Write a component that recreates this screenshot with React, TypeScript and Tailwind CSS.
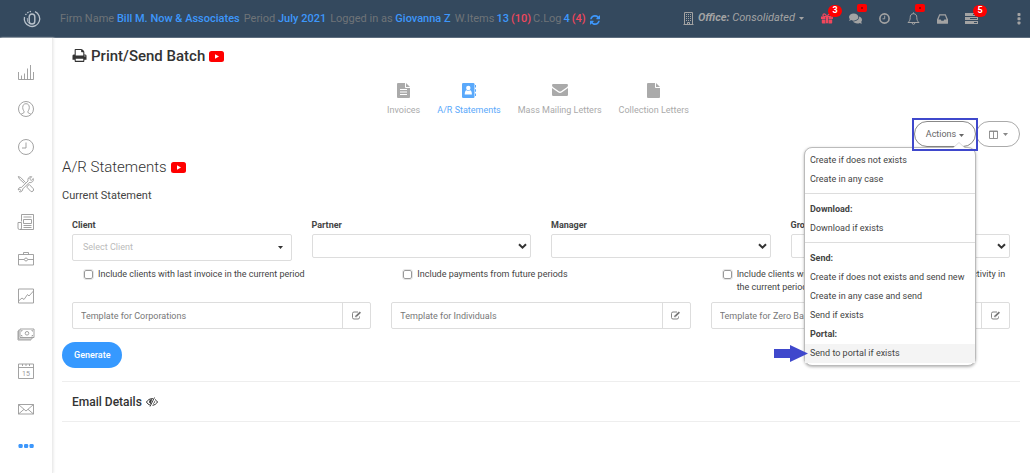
import type { ReactNode } from "react";
import { FaComments } from "react-icons/fa";

const App = () => {
  return (
    <div className="flex min-h-screen flex-col bg-white font-['Roboto',sans-serif] text-[9px] text-[#444]">
      <TopBar />
      <div className="flex flex-1">
        <Sidebar />
        <main className="min-w-0 flex-1 pt-2 pr-[10px] pl-[9px]">
          <h1 className="flex h-5 items-center gap-1 pl-[10px] text-[15px] font-medium text-[#333]">
            <PrintIcon />
            Print/Send Batch
            <VideoIcon />
          </h1>
          <Tabs />
          <Toolbar />
          <StatementForm />
        </main>
      </div>
    </div>
  );
};

const TopBar = () => (
  <header className="flex h-[38px] items-center border-b border-[#5d6d7e] bg-[#34495e] pr-[6px] text-[11px] whitespace-nowrap text-[#6f7478]">
    <div className="flex w-[60px] shrink-0 justify-center pl-1">
      <Logo />
    </div>
    <div className="flex items-center gap-1 pt-[2px]">
      <span>
        Firm Name <b className="font-medium text-[#3d97fb]">Bill M. Now &amp; Associates</b>
      </span>
      <span>
        Period <b className="font-medium text-[#3d97fb]">July 2021</b>
      </span>
      <span>
        Logged in as <b className="font-medium text-[#3d97fb]">Giovanna Z</b>
      </span>
      <span className="flex items-center gap-[2px]">
        W.Items <b className="font-medium text-[#3d97fb]">13</b>
        <b className="font-medium text-[#f0475c]">(10)</b>
        C.Log <b className="font-medium text-[#3d97fb]">4</b>
        <b className="font-medium text-[#f0475c]">(4)</b>
        <button aria-label="Refresh" className="pl-[2px] text-[#3d97fb]">
          <RefreshIcon />
        </button>
      </span>
    </div>
    <div className="ml-auto flex items-center text-[#a3a3a3]">
      <button className="mr-[8px] flex items-center gap-1 italic">
        <BuildingIcon />
        <span>
          <b>Office:</b> Consolidated
        </span>
        <Caret />
      </button>
      {notifications.map((item) => (
        <button
          key={item.label}
          aria-label={item.label}
          className="relative flex h-6 w-[29px] items-center justify-center"
        >
          {item.icon}
          {item.count && (
            <span className="absolute -top-[2px] left-4 flex h-[12px] w-[14px] items-center justify-center rounded-full bg-[#f00] text-[9px] font-bold text-white">
              {item.count}
            </span>
          )}
          {item.dot && (
            <span className="absolute -top-[3px] left-4 flex h-2 w-[10px] items-center justify-center rounded-xs bg-[#f00]">
              <span className="size-[2px] bg-[#a00]" />
            </span>
          )}
        </button>
      ))}
      <button aria-label="More" className="ml-[28px] px-[3px]">
        <svg width="4" height="12" viewBox="0 0 4 12" fill="currentColor">
          <rect x=".5" y="0" width="3" height="3" rx=".8" />
          <rect x=".5" y="4.200" width="3" height="3" rx=".8" />
          <rect x=".5" y="8.400" width="3" height="3" rx=".8" />
        </svg>
      </button>
    </div>
  </header>
);

const Sidebar = () => (
  <nav className="flex w-[53px] shrink-0 flex-col border-r border-[#ececec] pt-[15px] pb-2 shadow-[1px_0_2px_#eee]">
    {sideLinks.map((link) => (
      <a
        key={link.label}
        href="#"
        aria-label={link.label}
        className="flex flex-1 items-center justify-center text-[#999]"
      >
        <svg
          width="18"
          height="18"
          viewBox="0 0 18 18"
          fill="none"
          stroke="currentColor"
          strokeWidth="0.9"
        >
          {link.drawing}
        </svg>
      </a>
    ))}
  </nav>
);

const Tabs = () => (
  <nav className="mt-[14px] flex justify-center gap-[17px] pr-[6px]">
    {tabs.map((tab) => (
      <a
        key={tab.label}
        href="#"
        className={
          tab.active
            ? "flex flex-col items-center text-[#5aa9fb]"
            : "flex flex-col items-center text-[#aaa]"
        }
      >
        <span className="flex h-5 items-center">{tab.icon}</span>
        <span className="h-4 pt-[2px] leading-4">{tab.label}</span>
      </a>
    ))}
  </nav>
);

const Toolbar = () => (
  <div className="mt-[5px] flex justify-end">
    <div className="relative z-10">
      <button className="flex h-[26px] w-[62px] items-center justify-center gap-[3px] rounded-full border border-[#888] pt-[2px] text-[#666]">
        Actions <Caret />
      </button>
      <ActionsMenu />
      {/* highlight frame around the button */}
      <div className="pointer-events-none absolute -inset-x-[2px] -top-[3px] h-[33px] border-2 border-[#3f48cc]" />
    </div>
    <button
      aria-label="Columns"
      className="flex h-[26px] w-[44px] items-center justify-center gap-[5px] rounded-full border border-[#aaa] text-[#888]"
    >
      <svg width="9" height="9" viewBox="0 0 9 9" fill="none" stroke="currentColor">
        <path d="M.5 1h8v7.500h-8zM.5 1.500h8M4.500 1v7.500" strokeWidth="0.9" />
      </svg>
      <Caret />
    </button>
  </div>
);

const ActionsMenu = () => (
  <div className="absolute top-[26px] right-0 w-[172px] rounded-lg border border-[#bbb] bg-white pt-[3px] pb-[2px] shadow-[0_1px_3px_rgba(0,0,0,0.3)]">
    <svg
      className="absolute -top-[6px] right-[10px]"
      width="12"
      height="7"
      viewBox="0 0 12 7"
      fill="#fff"
    >
      <path d="M0 6 6 .5 12 6" stroke="#ccc" strokeWidth="0.7" />
      <path d="M0 6h12v1H0z" />
    </svg>
    {menuGroups.map((group, i) => (
      <div key={i} className={group.divided ? "mt-1 border-t border-[#ddd] pt-[6px]" : ""}>
        {group.title && (
          <div className="h-[19px] pl-[5px] leading-[19px] font-bold">{group.title}</div>
        )}
        {group.items.map((item) => (
          <button
            key={item}
            className={
              item === "Send to portal if exists"
                ? "block h-[19px] w-full bg-[#f4f4f4] pl-[5px] text-left leading-[19px] whitespace-nowrap"
                : "block h-[19px] w-full pl-[5px] text-left leading-[19px] whitespace-nowrap"
            }
          >
            {item}
          </button>
        ))}
      </div>
    ))}
    <svg
      className="absolute bottom-[2px] -left-[32px]"
      width="35"
      height="19"
      viewBox="0 0 35 19"
      fill="#3f48cc"
    >
      <path d="M1 5h16V1l18 8.500-18 8.500v-4H1z" />
    </svg>
  </div>
);

const StatementForm = () => (
  <form>
    <h2 className="mt-2 flex h-6 items-center gap-1 text-[15px] font-light text-[#333]">
      A/R Statements
      <VideoIcon />
    </h2>
    <p className="mt-[9px] h-4 text-[11px] leading-4">Current Statement</p>

    <div className="mt-[13px] grid grid-cols-4">
      {filters.map((name) => (
        <div key={name} className="px-[10px]">
          <label htmlFor={name} className="block h-[17px] leading-[17px] font-bold">
            {name}
          </label>
          <div className="relative">
            <select
              id={name}
              className={
                name === "Client"
                  ? "block h-[27px] w-full appearance-none rounded-xs border border-[#ddd] bg-white pl-[10px] text-[#bbb]"
                  : "block h-6 w-full appearance-none rounded-xs border border-[#ddd] bg-white pl-[10px]"
              }
            >
              <option>{name === "Client" ? "Select Client" : ""}</option>
            </select>
            {name === "Client" ? (
              <span className="pointer-events-none absolute top-3 right-[9px] text-[#333]">
                <Caret />
              </span>
            ) : (
              <svg
                className="pointer-events-none absolute top-[9px] right-1"
                width="9"
                height="7"
                viewBox="0 0 9 7"
                fill="none"
                stroke="#333"
                strokeWidth="2"
              >
                <path d="m1 1.200 3.500 3.500L8 1.200" />
              </svg>
            )}
          </div>
        </div>
      ))}
    </div>

    <div className="mt-[7px] grid grid-cols-3">
      {options.map((option) => (
        <label key={option} className="flex items-start gap-[5px] pr-[14px] pl-[22px] leading-[13px]">
          <input
            type="checkbox"
            className="mt-[2px] size-[9px] shrink-0 appearance-none rounded-[2px] border border-[#999] bg-white outline outline-[#e5e5e5]"
          />
          {option}
        </label>
      ))}
    </div>

    <div className="mt-2 grid grid-cols-3">
      {templates.map((template) => (
        <div key={template} className="px-[10px]">
          <div className="flex h-[27px] rounded-xs border border-[#ddd]">
            <input
              aria-label={template}
              placeholder={template}
              className="min-w-0 flex-1 px-2 pt-[2px] placeholder:text-[#777]"
            />
            <button
              type="button"
              aria-label="Edit template"
              className="flex w-7 items-center justify-center border-l border-[#ddd] text-[#777]"
            >
              <EditIcon />
            </button>
          </div>
        </div>
      ))}
    </div>

    <button
      type="button"
      className="mt-[13px] block h-[26px] rounded-full bg-[#3699ff] px-3 pt-[2px] font-medium text-white"
    >
      Generate
    </button>

    <h3 className="mt-[13px] flex h-[41px] items-center gap-1 border-y border-[#eee] pl-[10px] text-[12px] font-medium text-[#333]">
      Email Details
      <EyeIcon />
    </h3>
  </form>
);

const Caret = () => (
  <svg width="5" height="3" viewBox="0 0 5 3" fill="currentColor">
    <path d="M0 0h5L2.500 3z" />
  </svg>
);

const Logo = () => (
  <svg width="18" height="18" viewBox="0 0 18 18" fill="none" stroke="#b9c2cb">
    <path d="M12 1.700a7.700 7.700 0 1 1-10.500 5.300" strokeWidth="1.300" />
    <path d="M2.500 5A8 8 0 0 1 8 1.300" strokeWidth="1.200" strokeDasharray="1.500 1.200" />
    <path d="M4.300 8A6 6 0 0 0 7 14.300" strokeWidth="0.800" />
    <rect x="6.200" y="4" width="5.600" height="10" rx="2.800" strokeWidth="1.400" />
  </svg>
);

const VideoIcon = () => (
  <svg width="15" height="11" viewBox="0 0 15 11">
    <rect width="15" height="11" rx="2.500" fill="#f00" />
    <path d="M6 3.200v4.600l4-2.300z" fill="#fff" />
  </svg>
);

const PrintIcon = () => (
  <svg width="15" height="14" viewBox="0 0 1664 1664" fill="currentColor">
    <path d="M384 1408h896v-256H384v256zm0-640h896V384h-160q-40 0-68-28t-28-68V128H384v640zm1152 64q0-26-19-45t-45-19-45 19-19 45 19 45 45 19 45-19 19-45zm128 0v416q0 13-9.500 22.500t-22.500 9.500h-224v160q0 40-28 68t-68 28H352q-40 0-68-28t-28-68v-160H32q-13 0-22.500-9.500T0 1248V832q0-79 56.500-135.500T192 640h64V96q0-40 28-68t68-28h672q40 0 88 20t76 48l152 152q28 28 48 76t20 88v256h64q79 0 135.500 56.500T1664 832z" />
  </svg>
);

const RefreshIcon = () => (
  <svg width="10" height="10" viewBox="0 0 1536 1536" fill="currentColor">
    <path d="M1511 928q0 5-1 7-64 268-268 434.500T764 1536q-146 0-282.500-55T238 1324l-129 129q-19 19-45 19t-45-19-19-45V960q0-26 19-45t45-19h448q26 0 45 19t19 45-19 45l-137 137q71 66 161 102t187 36q134 0 250-65t186-179q11-17 53-117 8-23 30-23h192q13 0 22.500 9.500t9.500 22.500zm25-800v448q0 26-19 45t-45 19h-448q-26 0-45-19t-19-45 19-45l138-138Q969 256 768 256q-134 0-250 65T332 500q-11 17-53 117-8 23-30 23H50q-13 0-22.500-9.500T18 608v-7q65-268 270-434.500T768 0q146 0 284 55.500T1297 212l130-129q19-19 45-19t45 19 19 45z" />
  </svg>
);

const BuildingIcon = () => (
  <svg width="11" height="13" viewBox="0 0 11 13" fill="none" stroke="currentColor">
    <path d="M1.500.5h8v12h-8zM.5 12.500h10M4.500 12.500v-2h2v2" />
    <path d="M3 2.500h5M3 4.500h5M3 6.500h5M3 8.500h5" strokeDasharray="1 1" />
  </svg>
);

const GiftIcon = () => (
  <svg width="12" height="11" viewBox="0 0 12 11" fill="#f0475c">
    <path d="M0 3.500h4.500V6H0zM7.500 3.500H12V6H7.500zM5 3.500h2v6.700H5zM.8 6.500h3.700v4H1.500q-.7 0-.7-.7zM7.500 6.500h3.700v3.300q0 .7-.7.7h-3z" />
    <path
      d="M5.800 3.500H3.300A1.300 1.300 0 0 1 3.300.8q1.200 0 2.500 2.700zM6.200 3.500h2.500A1.300 1.300 0 0 0 8.700.8Q7.500.8 6.200 3.500z"
      fill="none"
      stroke="#f0475c"
      strokeWidth="1.200"
    />
  </svg>
);

const ClockIcon = () => (
  <svg width="11" height="11" viewBox="0 0 11 11" fill="none" stroke="currentColor">
    <circle cx="5.500" cy="5.500" r="4.600" strokeWidth="1.600" />
    <path d="M5.700 2.700v3.100H3.500" />
  </svg>
);

const BellIcon = () => (
  <svg width="13" height="13" viewBox="0 0 13 13" fill="none" stroke="currentColor">
    <path d="M6.500 1.700C4 1.700 3.200 3.500 3.200 5.500c0 2.500-.7 3.700-2.200 5h11c-1.500-1.300-2.200-2.500-2.200-5 0-2-.8-3.800-3.300-3.800zM6.500.4v1.300M5.200 11a1.300 1.300 0 0 0 2.600 0" />
  </svg>
);

const InboxIcon = () => (
  <svg width="11" height="10" viewBox="0 0 11 10" fill="currentColor" fillRule="evenodd">
    <path d="M2.300.3h6.400L11 5.500v3.700q0 .6-.6.6H.6q-.6 0-.6-.6V5.500zM3 1.500 1.500 5.400h2.200l.7 1.400h2.200l.7-1.400h2.200L8 1.500z" />
  </svg>
);

const TasksIcon = () => (
  <svg width="13" height="11" viewBox="0 0 13 11" fill="currentColor">
    <path d="M0 0h13v3H0zm0 4h13v3H0zm0 4h13v3H0z" />
    <path d="M8 1h4v1H8zM5 5h7v1H5zM9 9h3v1H9z" fill="#34495e" />
  </svg>
);

const FileIcon = ({ lines }: { lines?: boolean }) => (
  <svg width="13" height="15" viewBox="0 0 13 15" fill="currentColor">
    <path d="M1 0h7v4.200q0 .8.800.8H13v9q0 1-1 1H1q-1 0-1-1V1q0-1 1-1z" />
    <path d="M9 0 13 4H9z" />
    {lines && <path d="M3 6.500h7M3 9h7M3 11.500h7" stroke="#fff" strokeWidth="1" />}
  </svg>
);

const AddressBookIcon = () => (
  <svg width="14" height="15" viewBox="0 0 14 15" fill="currentColor">
    <path d="M1.300 0h10q1.200 0 1.200 1.200v12.600q0 1.200-1.200 1.200h-10Q0 15 0 13.800V1.200Q0 0 1.300 0z" />
    <path d="M13 2h1v2.500h-1zM13 6.200h1v2.500h-1zM13 10.400h1v2.500h-1z" />
    <circle cx="6.300" cy="5" r="2.200" fill="#fff" />
    <path d="M2.700 11.500q0-4 2-4.200 1.600 1 3.200 0 2 .2 2 4.200z" fill="#fff" />
  </svg>
);

const EnvelopeIcon = () => (
  <svg width="16" height="12" viewBox="0 0 16 12" fill="currentColor">
    <path d="M1.200 0h13.600Q16 0 16 1.200 16 2.500 14.500 3.500L9.500 7q-1.500 1-3 0l-5-3.500Q0 2.500 0 1.200 0 0 1.200 0z" />
    <path d="M0 4q.6.600 1.400 1.100L6 8.300q2 1.200 4 0l4.600-3.200Q15.400 4.600 16 4v6.800q0 1.200-1.200 1.200H1.200Q0 12 0 10.800z" />
  </svg>
);

const EditIcon = () => (
  <svg width="10" height="9" viewBox="0 0 10 9" fill="none" stroke="currentColor">
    <path d="M6 1H2Q.5 1 .5 2.500v4Q.5 8 2 8h4q1.500 0 1.500-1.500V5.500" strokeWidth="0.900" />
    <path d="M4.300 5.200 8.400 1.100" strokeWidth="1.800" />
    <path d="M3.400 6.100v-1.500L4.900 6z" fill="currentColor" strokeWidth="0.300" />
  </svg>
);

const EyeIcon = () => (
  <svg width="12" height="10" viewBox="0 0 12 10" fill="none" stroke="currentColor">
    <path d="M4.500 8.200C2.500 7.700 1.200 6.400.5 5 1.700 3 3.600 1.700 6 1.700h1M9 2.500c1 .6 1.900 1.500 2.500 2.500-1.100 1.900-2.900 3.100-5 3.300" />
    <path d="M8.500.5 4 9.500M3.500 4.500q.3-1.700 2-2l-1 4q-1-.5-1-2z" strokeWidth="0.900" fill="currentColor" />
    <path d="M8.700 4.200q.1 1.700-1.500 2.400" strokeWidth="0.800" />
  </svg>
);

interface Notification {
  label: string;
  icon: ReactNode;
  count?: number;
  dot?: boolean;
}

const notifications: Notification[] = [
  { label: "Gifts", icon: <GiftIcon />, count: 3 },
  { label: "Messages", icon: <FaComments size={13} />, dot: true },
  { label: "Timer", icon: <ClockIcon /> },
  { label: "Alerts", icon: <BellIcon />, dot: true },
  { label: "Inbox", icon: <InboxIcon /> },
  { label: "Tasks", icon: <TasksIcon />, count: 5 },
];

const tabs = [
  { label: "Invoices", icon: <FileIcon lines />, active: false },
  { label: "A/R Statements", icon: <AddressBookIcon />, active: true },
  { label: "Mass Mailing Letters", icon: <EnvelopeIcon />, active: false },
  { label: "Collection Letters", icon: <FileIcon />, active: false },
];

const menuGroups = [
  { title: "", divided: false, items: ["Create if does not exists", "Create in any case"] },
  { title: "Download:", divided: true, items: ["Download if exists"] },
  {
    title: "Send:",
    divided: true,
    items: [
      "Create if does not exists and send new",
      "Create in any case and send",
      "Send if exists",
    ],
  },
  { title: "Portal:", divided: false, items: ["Send to portal if exists"] },
];

const filters = ["Client", "Partner", "Manager", "Group"];

const options = [
  "Include clients with last invoice in the current period",
  "Include payments from future periods",
  "Include clients with zero balance, in case there was some activity in the current period",
];

const templates = [
  "Template for Corporations",
  "Template for Individuals",
  "Template for Zero Balance",
];

const sideLinks = [
  {
    label: "Dashboard",
    drawing: <path d="M1.500 9v7.500h15V9M4.500 12.500v4M7.500 10.500v6M10.500 5.500v11M13.500 2v14.500" />,
  },
  {
    label: "Clients",
    drawing: (
      <>
        <circle cx="9" cy="9" r="7.500" />
        <path d="M4 14.500c.5-1.200 3.200-1 3.200-2.500 0-1-1.500-2-1.500-4.500C5.700 5 7 3.700 9 3.700s3.300 1.300 3.300 3.800-1.500 3.500-1.500 4.500c0 1.500 2.700 1.300 3.200 2.500" />
      </>
    ),
  },
  {
    label: "Time",
    drawing: (
      <>
        <circle cx="9" cy="9" r="7.500" />
        <path d="M9 4.500V10H5" />
      </>
    ),
  },
  {
    label: "Tools",
    drawing: (
      <>
        <path d="M4.300 12.500 11 6c-.6-2.500 1-4.800 3.700-4.300L12.600 4l1.600 1.500 2.100-2c.7 2.700-1.600 4.600-4.100 4L5.700 14c.4 1.600-1.500 3.300-3.300 2.800l1.400-1.500-1-1.200L1.300 15c-.3-1.700 1.400-3 3-2.500z" />
        <path d="m1.300 1.500 2.400 1 4.800 5M1.300 1.500l1 2.300 5 4.500M10.800 10.500l1.500-1 4 4.200q.8 1.400-.3 2.400t-2.300.2l-3.900-4.200z" />
      </>
    ),
  },
  {
    label: "News",
    drawing: (
      <path d="M4.500 8.500V1.500h12v15h-14q-1.500 0-1.500-1.500V9.500h3.500V15q0 1.500-1.500 1.500M6.500 4h8M6.500 6.500h8v4h-8zM6.500 12.500h8M6.500 14.500h8" />
    ),
  },
  {
    label: "Cases",
    drawing: (
      <>
        <path d="M1.500 4.500h15v10.500h-15zM6.500 4.500v-2h5v2M1.500 9.500H7M11 9.500h5.500" />
        <circle cx="9" cy="9.500" r="1.500" />
      </>
    ),
  },
  {
    label: "Reports",
    drawing: <path d="M1.500 2h15v14h-15zM1.500 14l3.500-3 2 1.500 3.500-5 1.500 1.500 4.500-5" />,
  },
  {
    label: "Payments",
    drawing: (
      <>
        <path d="M3 4h14v8.500H3zM2.500 5H1.700v9H15v-1.500M1 6v9h13" />
        <circle cx="10" cy="8.300" r="1.800" />
        <path d="M4.500 6.500v-1h1M14.500 5.500h1v1M4.500 10v1h1M14.500 11h1v-1" />
      </>
    ),
  },
  {
    label: "Calendar",
    drawing: (
      <>
        <path d="M1.500 2h15v14.500h-15zM1.500 5.500h15M5.500 2v2M9 2v2M12.500 2v2" />
        <text
          x="9"
          y="13.500"
          textAnchor="middle"
          fontSize="7"
          fill="currentColor"
          stroke="none"
        >
          15
        </text>
      </>
    ),
  },
  {
    label: "Mail",
    drawing: <path d="M1.500 4.500h15v9.500h-15zM1.500 4.500 9 11l7.500-6.500M1.500 14 7 9.300M16.500 14 11 9.300" />,
  },
  {
    label: "More",
    drawing: (
      <g fill="#3d97fb" stroke="none">
        <rect x="1.500" y="7" width="4.200" height="4" rx="1.200" />
        <rect x="7" y="7" width="4.200" height="4" rx="1.200" />
        <rect x="12.500" y="7" width="4.200" height="4" rx="1.200" />
      </g>
    ),
  },
];

export default App;
